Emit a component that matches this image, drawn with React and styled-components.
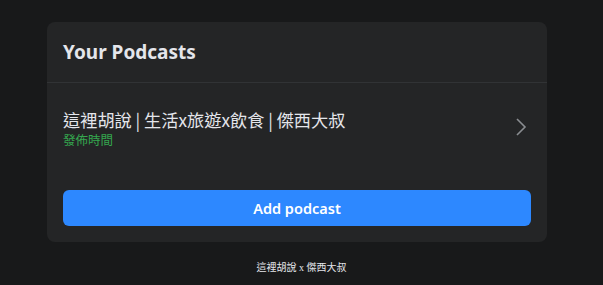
import React from "react";
import styled, { createGlobalStyle } from "styled-components";

const Global = createGlobalStyle`
  html, body { margin: 0; padding: 0; background: #18191a; }
  body { font-family: "Noto Sans", "Noto Sans CJK TC", sans-serif; }
`;

const Page = styled.div`
  width: 603px;
  padding-top: 22px;
  display: flex;
  flex-direction: column;
`;

const Card = styled.section`
  width: 500px;
  margin-left: 47px;
  background: #242526;
  border-radius: 8px;
  box-sizing: border-box;
`;

const Header = styled.div`
  height: 60px;
  padding: 0 16px;
  display: flex;
  align-items: center;
  border-bottom: 1px solid #313335;
`;

const Title = styled.h2`
  margin: 0;
  font-size: 19px;
  font-weight: 700;
  color: #e4e6eb;
`;

const Row = styled.div`
  display: flex;
  align-items: center;
  padding: 25px 16px 0;
`;

const RowText = styled.div`
  flex: 1;
  display: flex;
  flex-direction: column;
`;

const RowTitle = styled.div`
  font-size: 17.2px;
  line-height: 23px;
  color: #e4e6eb;
  font-family: "Noto Sans CJK TC", sans-serif;
`;

const RowSub = styled.div`
  font-size: 12.5px;
  line-height: 18px;
  color: #35a84f;
  font-family: "Noto Sans CJK TC", sans-serif;
`;

const Chevron = styled.svg`
  width: 12px;
  height: 20px;
  margin-right: 4px;
  margin-top: -4px;
`;

const Actions = styled.div`
  padding: 41px 16px 16px;
`;

const Button = styled.button`
  display: block;
  width: 100%;
  height: 36px;
  border: none;
  border-radius: 6px;
  background: #2d88ff;
  color: #fff;
  font-family: "Noto Sans", sans-serif;
  font-size: 14.5px;
  font-weight: 600;
  cursor: pointer;
`;

const Footer = styled.footer`
  margin-top: 19px;
  text-align: center;
  font-family: "Liberation Serif", "Noto Sans CJK TC", serif;
  font-size: 10px;
  line-height: 14px;
  color: #e4e6eb;
`;

export default function App() {
  return (
    <Page>
      <Global />
      <Card>
        <Header>
          <Title>Your Podcasts</Title>
        </Header>
        <Row>
          <RowText>
            <RowTitle>這裡胡說 | 生活x旅遊x飲食 | 傑西大叔</RowTitle>
            <RowSub>發佈時間</RowSub>
          </RowText>
          <Chevron viewBox="0 0 12 20">
            <path d="M2 2 L10 10 L2 18" fill="none" stroke="#8a8d91" strokeWidth="1.6" />
          </Chevron>
        </Row>
        <Actions>
          <Button>Add podcast</Button>
        </Actions>
      </Card>
      <Footer>這裡胡說 x 傑西大叔</Footer>
    </Page>
  );
}
